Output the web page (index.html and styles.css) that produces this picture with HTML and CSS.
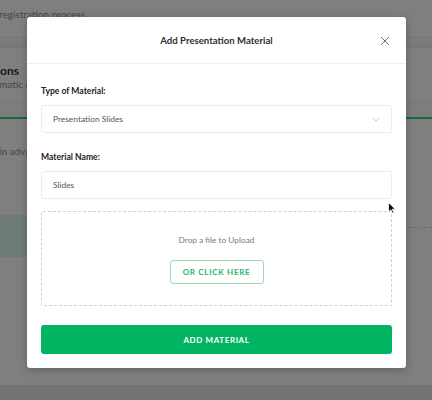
FILE: index.html
```html
<!DOCTYPE html>
<html lang="en">
<head>
    <meta charset="UTF-8">
    <title>Add Presentation Material</title>
    <link rel="stylesheet" href="styles.css">
</head>
<body>

    <!-- page behind the modal -->
    <div class="page">
        <div class="page-top">
            <p class="muted">registration process.</p>
        </div>
        <div class="page-band"></div>
        <div class="page-section">
            <p class="section-title">ons</p>
            <p class="muted">matic e</p>
        </div>
        <div class="page-gap"></div>
        <div class="page-tabs"></div>
        <div class="page-section tall">
            <p class="muted">in adva</p>
        </div>
        <div class="page-row">
            <div class="page-card"></div>
            <div class="page-dots"></div>
        </div>
        <div class="page-foot"></div>
    </div>

    <div class="overlay"></div>

    <div class="modal">
        <div class="modal-header">
            <h2>Add Presentation Material</h2>
            <button class="close-btn" aria-label="Close">
                <svg width="10" height="10" viewBox="0 0 10 10">
                    <path d="M1 1 L9 9 M9 1 L1 9" stroke="#707070" stroke-width="1" fill="none"/>
                </svg>
            </button>
        </div>

        <div class="modal-body">
            <label class="field-label">Type of Material:</label>
            <div class="select-box">
                <span>Presentation Slides</span>
                <svg width="8" height="5" viewBox="0 0 8 5">
                    <path d="M0.5 0.5 L4 4 L7.5 0.5" stroke="#c4c4c4" stroke-width="0.9" fill="none"/>
                </svg>
            </div>

            <label class="field-label second">Material Name:</label>
            <div class="text-input">Slides</div>

            <div class="dropzone">
                <p>Drop a file to Upload</p>
                <button class="outline-btn">OR CLICK HERE</button>
            </div>

            <button class="primary-btn">ADD MATERIAL</button>
        </div>
    </div>

    <svg class="cursor" width="8" height="12" viewBox="0 0 8 12">
        <path d="M0.5 0.5 L0.5 10 L2.8 7.8 L4.4 11.2 L5.8 10.5 L4.3 7.2 L7.3 7.2 Z" fill="#111" stroke="#fff" stroke-width="0.8"/>
    </svg>

</body>
</html>
```

FILE: styles.css
```css
* {
    margin: 0;
    padding: 0;
    box-sizing: border-box;
}

body {
    font-family: Lato, 'Open Sans', sans-serif;
    background-color: #efefef;
    width: 432px;
    height: 400px;
    overflow: hidden;
    position: relative;
}

/* Page behind the modal */
.page {
    display: flex;
    flex-direction: column;
    height: 400px;
}

.muted {
    font-size: 10px;
    color: #8e8e8e;
    margin-left: -1px;
    white-space: nowrap;
}

.page-top {
    height: 37px;
    background-color: #fff;
    padding-top: 8px;
}

.page-band {
    height: 11px;
    background-color: #f6f6f6;
    border-top: 1px solid #ececec;
    border-bottom: 1px solid #ececec;
}

.page-section {
    height: 55px;
    background-color: #fff;
    padding-top: 15px;
    border-bottom: 1px solid #ececec;
}

.section-title {
    font-size: 12px;
    font-weight: 700;
    color: #333;
    line-height: 15px;
}

.page-gap {
    height: 14px;
    background-color: #fafafa;
}

.page-tabs {
    height: 2px;
    background-color: #27d675;
}

.page-section.tall {
    height: 96px;
    padding-top: 26px;
    border-bottom: none;
}

.page-row {
    display: flex;
    height: 42px;
    background-color: #fff;
}

.page-card {
    width: 260px;
    background-color: #dff9f1;
}

.page-dots {
    flex: 1;
    margin-top: 12px;
    border-top: 1px dashed #d8d8d8;
}

.page-foot {
    flex: 1;
    background-color: #fff;
    border-bottom: 15px solid #e6e6e6;
}

.overlay {
    position: absolute;
    inset: 0;
    background-color: rgba(0, 0, 0, 0.5);
}

/* Modal */
.modal {
    position: absolute;
    left: 27px;
    top: 17px;
    width: 379px;
    height: 351px;
    background-color: #fff;
    border-radius: 3px;
    box-shadow: 0 2px 8px rgba(0, 0, 0, 0.25);
}

.modal-header {
    height: 47px;
    border-bottom: 1px solid #eeeeee;
    display: flex;
    align-items: center;
    justify-content: center;
    position: relative;
}

.modal-header h2 {
    font-size: 9.6px;
    font-weight: 700;
    color: #2f2f2f;
}

.close-btn {
    position: absolute;
    right: 16px;
    top: 19px;
    border: none;
    background: none;
    width: 10px;
    height: 10px;
    display: flex;
}

.modal-body {
    padding: 20px 14px 14px 14px;
    display: flex;
    flex-direction: column;
}

.field-label {
    font-size: 8.6px;
    font-weight: 700;
    color: #222;
    line-height: 14px;
    margin-bottom: 7px;
}

.field-label.second {
    margin-top: 17px;
}

.select-box,
.text-input {
    height: 28px;
    border: 1px solid #ebebeb;
    border-radius: 3px;
    padding: 0 11px;
    font-size: 8.4px;
    color: #555;
    display: flex;
    align-items: center;
    justify-content: space-between;
}

.dropzone {
    margin-top: 12px;
    height: 95px;
    border: 1px dashed #cfcfd6;
    border-radius: 2px;
    display: flex;
    flex-direction: column;
    align-items: center;
    padding-top: 21px;
}

.dropzone p {
    font-size: 8.3px;
    color: #7b7b7b;
    line-height: 14px;
    margin-bottom: 13px;
}

.outline-btn {
    width: 94px;
    height: 24px;
    border: 1px solid #9ad9b2;
    border-radius: 3px;
    background-color: #fff;
    color: #1fb566;
    font-family: Lato, sans-serif;
    font-size: 8px;
    font-weight: 700;
    letter-spacing: 0.7px;
}

.primary-btn {
    margin-top: 19px;
    height: 29px;
    border: none;
    border-radius: 3px;
    background-color: #00b462;
    color: #fff;
    font-family: Lato, sans-serif;
    font-size: 8px;
    font-weight: 700;
    letter-spacing: 0.6px;
}

.cursor {
    position: absolute;
    left: 388px;
    top: 202px;
}
```
